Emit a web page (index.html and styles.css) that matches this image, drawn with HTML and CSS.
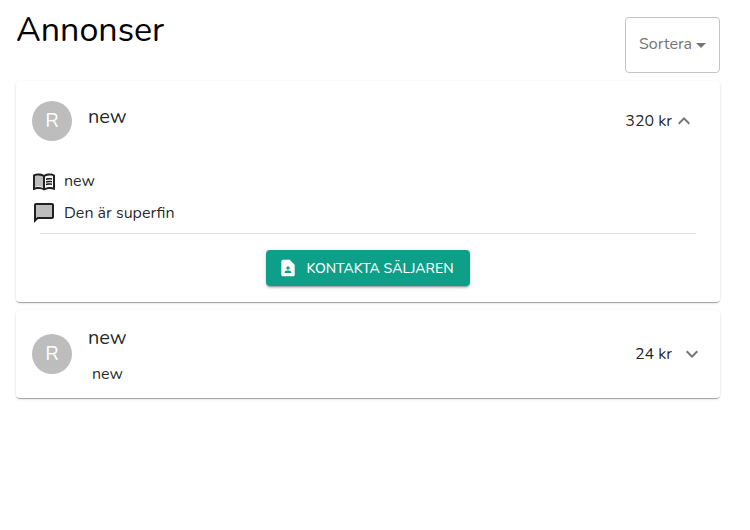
FILE: index.html
```html
<!DOCTYPE html>
<html lang="sv">
<head>
<meta charset="utf-8">
<meta name="viewport" content="width=device-width, initial-scale=1">
<title>Annonser</title>
<link rel="stylesheet" href="styles.css">
</head>
<body>
<main class="page">
  <header class="page-header">
    <h1 class="page-title">Annonser</h1>
    <div class="sort">
      <select class="sort-select" aria-label="Sortera">
        <option>Sortera</option>
      </select>
      <svg class="sort-arrow" viewBox="0 0 24 24" aria-hidden="true"><path d="M7 10l5 5 5-5z"/></svg>
    </div>
  </header>

  <article class="card">
    <div class="card-header">
      <div class="avatar">R</div>
      <div class="card-heading">
        <h2 class="card-title">new</h2>
      </div>
      <span class="price">320 kr</span>
      <button class="toggle toggle-open" type="button" aria-label="Visa mindre" aria-expanded="true">
        <svg class="icon" viewBox="0 0 24 24" aria-hidden="true"><path d="M12 8l-6 6 1.410 1.410L12 10.830l4.590 4.580L18 14z"/></svg>
      </button>
    </div>
    <div class="card-body">
      <ul class="details">
        <li class="detail">
          <svg class="icon" viewBox="0 0 24 24" aria-hidden="true">
            <path class="tint" d="M3 6.500c3-1.300 6-1 8 .2v11.500c-2-1-5-1.200-8-.2z"/>
            <path d="M21 5c-1.110-.35-2.330-.5-3.500-.5-1.950 0-4.050.4-5.500 1.500-1.450-1.100-3.550-1.500-5.500-1.500S2.450 4.900 1 6v14.650c0 .25.25.5.5.5.1 0 .15-.05.25-.05C3.100 20.450 5.050 20 6.500 20c1.950 0 4.050.4 5.500 1.500 1.350-.85 3.800-1.500 5.500-1.500 1.650 0 3.350.3 4.750 1.050.1.050.15.050.25.050.25 0 .5-.25.5-.5V6c-.6-.45-1.250-.75-2-1zM3 18.500V7c1.100-.35 2.300-.5 3.500-.5 1.340 0 3.130.41 4.500.99v11.500C9.630 18.410 7.840 18 6.500 18c-1.200 0-2.400.15-3.500.5zm18 0c-1.100-.35-2.300-.5-3.500-.5-1.340 0-3.130.41-4.500.99V7.490c1.370-.59 3.160-.99 4.500-.99 1.200 0 2.400.15 3.500.5v11.500z"/>
            <path d="M17.500 10.500c.88 0 1.730.09 2.500.26V9.240c-.79-.15-1.640-.24-2.500-.24-1.280 0-2.460.16-3.500.47v1.570c.99-.35 2.180-.54 3.500-.54zM17.500 13.160c.88 0 1.730.09 2.500.26V11.900c-.79-.15-1.640-.24-2.500-.24-1.280 0-2.460.16-3.500.47v1.570c.99-.34 2.180-.54 3.500-.54zM17.500 15.830c.88 0 1.730.09 2.500.26v-1.520c-.79-.15-1.640-.24-2.500-.24-1.280 0-2.460.16-3.500.47v1.570c.99-.35 2.180-.54 3.500-.54z"/>
          </svg>
          <span>new</span>
        </li>
        <li class="detail">
          <svg class="icon" viewBox="0 0 24 24" aria-hidden="true">
            <path class="tint" d="M4 4h16v12H5.200L4 17.200z"/>
            <path d="M20 2H4c-1.100 0-2 .9-2 2v18l4-4h14c1.100 0 2-.9 2-2V4c0-1.100-.9-2-2-2zm0 14H5.170L4 17.170V4h16v12z"/>
          </svg>
          <span>Den är superfin</span>
        </li>
      </ul>
      <hr class="divider">
      <div class="actions">
        <button class="contact" type="button">
          <svg class="contact-icon" viewBox="0 0 24 24" aria-hidden="true"><path d="M14 2H6c-1.100 0-1.990.9-1.990 2L4 20c0 1.100.89 2 1.990 2H18c1.100 0 2-.9 2-2V8l-6-6zm-2 8c1.100 0 2 .9 2 2s-.9 2-2 2-2-.9-2-2 .9-2 2-2zm4 8H8v-.57c0-.81.48-1.530 1.220-1.850.85-.37 1.790-.58 2.780-.58.990 0 1.930.21 2.780.58.740.320 1.220 1.040 1.220 1.850V18z"/></svg>
          <span>KONTAKTA SÄLJAREN</span>
        </button>
      </div>
    </div>
  </article>

  <article class="card">
    <div class="card-header">
      <div class="avatar">R</div>
      <div class="card-heading">
        <h2 class="card-title">new</h2>
        <p class="card-subtitle">new</p>
      </div>
      <span class="price">24 kr</span>
      <button class="toggle toggle-closed" type="button" aria-label="Visa mer" aria-expanded="false">
        <svg class="icon" viewBox="0 0 24 24" aria-hidden="true"><path d="M16.590 8.590L12 13.170 7.410 8.590 6 10l6 6 6-6z"/></svg>
      </button>
    </div>
  </article>
</main>
</body>
</html>
```
FILE: styles.css
```css
* {
  box-sizing: border-box;
}

body {
  margin: 0;
  background: #fff;
  color: rgba(0, 0, 0, 0.87);
  font-family: Nunito, "Open Sans", sans-serif;
  font-size: 16px;
  font-weight: 400;
  line-height: 24px;
}

h1, h2, p, ul {
  margin: 0;
  padding: 0;
  font-weight: inherit;
}

.page {
  display: flex;
  flex-direction: column;
  gap: 8px;
  padding: 17px 30px 16px 16px;
}

.page-header {
  display: flex;
  justify-content: space-between;
  align-items: flex-start;
}

.page-title {
  color: #000;
  font-size: 34px;
  line-height: 26px;
}

.sort {
  position: relative;
}

.sort-select {
  appearance: none;
  display: block;
  height: 56px;
  padding: 0 26px 2px 13px;
  border: 1px solid #c4c4c4;
  border-radius: 4px;
  background: #fff;
  color: #757575;
  font: inherit;
}

.sort-arrow {
  position: absolute;
  top: 16px;
  right: 7px;
  width: 24px;
  height: 24px;
  fill: #757575;
  pointer-events: none;
}

.card {
  border-radius: 4px;
  background: #fff;
  box-shadow: 0 2px 1px -1px rgba(0, 0, 0, 0.2), 0 1px 1px 0 rgba(0, 0, 0, 0.14), 0 1px 3px 0 rgba(0, 0, 0, 0.12);
}

.card-header {
  display: flex;
  align-items: center;
  min-height: 80px;
  padding: 12px 16px;
}

.avatar {
  display: flex;
  align-items: center;
  justify-content: center;
  width: 40px;
  height: 40px;
  margin-right: 16px;
  border-radius: 50%;
  background: #bdbdbd;
  color: #fff;
  font-size: 20px;
}

.card-heading {
  display: flex;
  flex: 1;
  flex-direction: column;
  gap: 12px;
  min-height: 40px;
  padding-top: 4px;
}

.card-title {
  font-size: 20px;
  line-height: 24px;
}

.card-subtitle {
  padding-left: 4px;
}

.icon {
  display: block;
  width: 24px;
  height: 24px;
  fill: currentColor;
}

.toggle {
  padding: 0;
  border: 0;
  background: none;
  color: #757575;
}

.toggle-open {
  margin-right: 8px;
}

.toggle-closed {
  margin-left: 8px;
}

.card-body {
  padding: 8px 16px 16px;
}

.details {
  display: flex;
  flex-direction: column;
  gap: 8px;
  list-style: none;
}

.detail {
  display: flex;
  align-items: center;
  gap: 8px;
}

.icon .tint {
  fill: #bdbdbd;
}

.divider {
  height: 1px;
  margin: 8px 8px 16px;
  border: 0;
  background: #e0e0e0;
}

.actions {
  display: flex;
  justify-content: center;
}

.contact {
  display: flex;
  align-items: center;
  gap: 8px;
  height: 36px;
  padding: 0 16px 0 12px;
  border: 0;
  border-radius: 4px;
  background: #0d9f88;
  box-shadow: 0 3px 1px -2px rgba(0, 0, 0, 0.2), 0 2px 2px 0 rgba(0, 0, 0, 0.14), 0 1px 5px 0 rgba(0, 0, 0, 0.12);
  color: #fff;
  font-family: inherit;
  font-size: 14px;
  font-weight: 500;
}

.contact-icon {
  width: 20px;
  height: 20px;
  fill: currentColor;
}
```
